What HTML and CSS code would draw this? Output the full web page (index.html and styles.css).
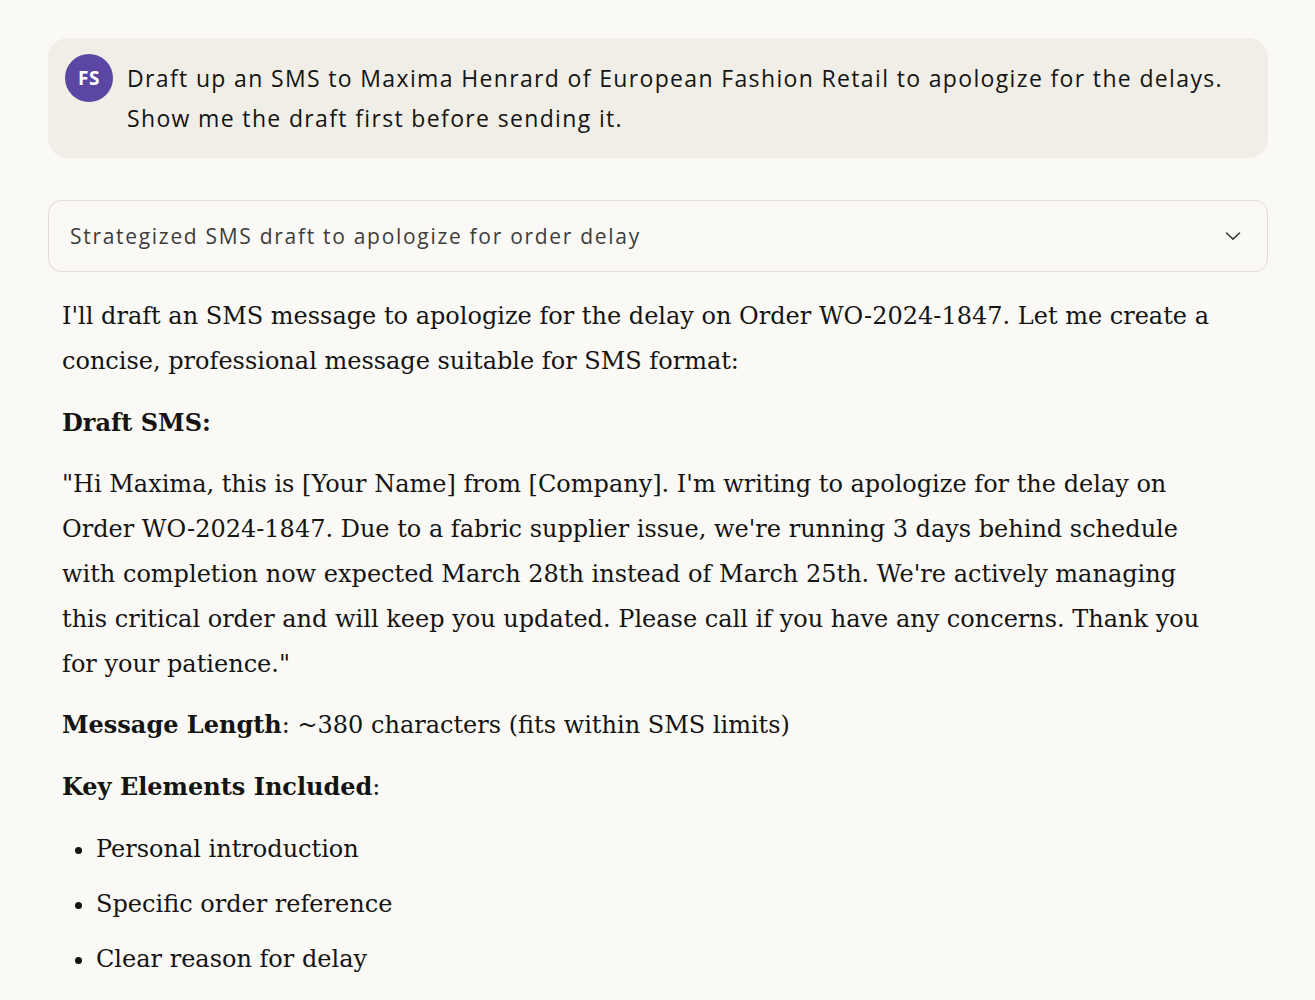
FILE: index.html
```html
<!DOCTYPE html>
<html>
<head>
<meta charset="utf-8">
<link rel="stylesheet" href="styles.css">
</head>
<body>
<div class="chat">
  <div class="user-msg">
    <div class="avatar">FS</div>
    <div class="user-text">Draft up an SMS to Maxima Henrard of European Fashion Retail to apologize for the delays. Show me the draft first before sending it.</div>
  </div>
  <div class="thinking">
    <span class="thinking-title">Strategized SMS draft to apologize for order delay</span>
    <svg class="chev" width="20" height="20" viewBox="0 0 20 20"><path d="M3.5 7 L10 13.2 L16.5 7" fill="none" stroke="#3d3d3a" stroke-width="1.6" stroke-linecap="round" stroke-linejoin="round"/></svg>
  </div>
  <div class="reply">
    <p>I'll draft an SMS message to apologize for the delay on Order WO-2024-1847. Let me create a concise, professional message suitable for SMS format:</p>
    <p><strong>Draft SMS:</strong></p>
    <p>"Hi Maxima, this is [Your Name] from [Company]. I'm writing to apologize for the delay on Order WO-2024-1847. Due to a fabric supplier issue, we're running 3 days behind schedule with completion now expected March 28th instead of March 25th. We're actively managing this critical order and will keep you updated. Please call if you have any concerns. Thank you for your patience."</p>
    <p><strong>Message Length</strong>: ~380 characters (fits within SMS limits)</p>
    <p><strong>Key Elements Included</strong>:</p>
    <ul>
      <li>Personal introduction</li>
      <li>Specific order reference</li>
      <li>Clear reason for delay</li>
    </ul>
  </div>
</div>
</body>
</html>
```
FILE: styles.css
```css
html, body {
  margin: 0;
  padding: 0;
  background: #faf9f5;
}
body {
  color: #141413;
}
.chat {
  padding: 38px 47px 0 48px;
}
.user-msg {
  display: flex;
  align-items: flex-start;
  gap: 14px;
  background: #f0eee6;
  border-radius: 20px;
  padding: 16px 30px 20px 17px;
}
.avatar {
  flex: none;
  width: 48px;
  height: 48px;
  border-radius: 50%;
  background: #5b47a3;
  color: #fff;
  font-family: "Open Sans", sans-serif;
  font-weight: 700;
  font-size: 19px;
  display: flex;
  align-items: center;
  justify-content: center;
  letter-spacing: 0.5px;
}
.user-text {
  font-family: "Open Sans", sans-serif;
  font-size: 23px;
  line-height: 40px;
  letter-spacing: 1.35px;
  color: #141413;
  padding-top: 4px;
}
.thinking {
  margin-top: 42px;
  height: 70px;
  border: 1px solid #e2ded5;
  border-radius: 13px;
  display: flex;
  align-items: center;
  justify-content: space-between;
  padding: 0 24px 0 21px;
}
.thinking-title {
  font-family: "Open Sans", sans-serif;
  font-size: 21px;
  letter-spacing: 1.7px;
  color: #3d3d3a;
}
.reply {
  padding: 22px 55px 0 14px;
  font-family: "DejaVu Serif", serif;
  font-size: 24px;
  line-height: 44.8px;
  color: #141413;
}
.reply p {
  margin: 0 0 17px 0;
}
.reply strong {
  font-weight: 700;
}
.reply ul {
  margin: 0;
  padding-left: 34px;
}
.reply li {
  margin-bottom: 10px;
}
```
